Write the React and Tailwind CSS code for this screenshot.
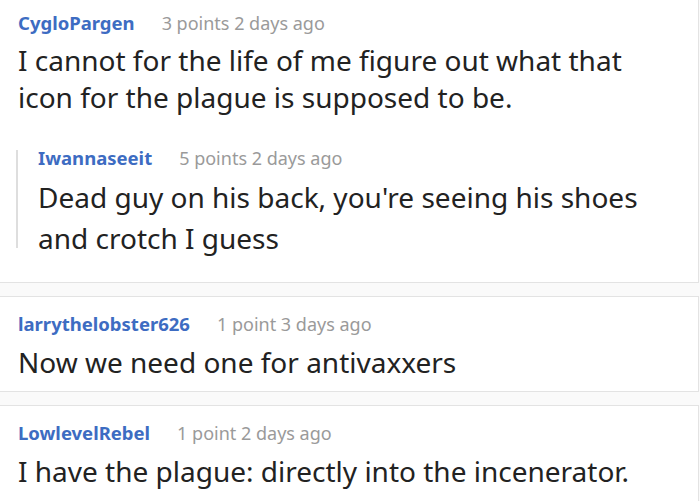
const comments = [
  {
    user: 'larrythelobster626',
    meta: '1 point 3 days ago',
    body: 'Now we need one for antivaxxers',
  },
  {
    user: 'LowlevelRebel',
    meta: '1 point 2 days ago',
    body: 'I have the plague: directly into the incenerator.',
  },
];

function Header({ user, meta }) {
  return (
    <div className="flex h-6 items-baseline gap-[27px] leading-6">
      <span className="text-[18.5px] font-bold text-[#3d6cc2]">{user}</span>
      <span className="text-[18px] text-[#9a9a9a]">{meta}</span>
    </div>
  );
}

export default function App() {
  return (
    <div
      className="h-[501px] overflow-hidden bg-[#fafafa] text-[#222]"
      style={{ fontFamily: '"Noto Sans", "Open Sans", sans-serif' }}
    >
      {/* Top comment with reply */}
      <div className="-mt-[6px] mr-[1px] border border-l-0 border-[#e3e3e3] bg-white pl-[18px] pr-[18px] pt-4 pb-[23px]">
        <Header user="CygloPargen" meta="3 points 2 days ago" />
        <p className="mt-[7px] text-[28px] leading-[37px]">
          I cannot for the life of me figure out what that icon for the plague is supposed to be.
        </p>
        <div className="relative mt-[30px] pl-[20px]">
          <span className="absolute left-[-2px] top-[4px] bottom-[11px] w-[2px] bg-[#dedede]" />
          <Header user="Iwannaseeit" meta="5 points 2 days ago" />
          <p className="mt-[7px] text-[28px] leading-[41px]">
            Dead guy on his back, you're seeing his shoes and crotch I guess
          </p>
        </div>
      </div>

      <div className="mt-[13px] flex flex-col gap-[13px]">
        {comments.map((c) => (
          <div
            key={c.user}
            className="mr-[1px] border border-l-0 border-[#e3e3e3] bg-white pl-[18px] pr-[18px] pt-[15px] pb-[10px] last:pb-[20px]"
          >
            <Header user={c.user} meta={c.meta} />
            <p className="mt-[7px] text-[28px] leading-[38px]">{c.body}</p>
          </div>
        ))}
      </div>
    </div>
  );
}
